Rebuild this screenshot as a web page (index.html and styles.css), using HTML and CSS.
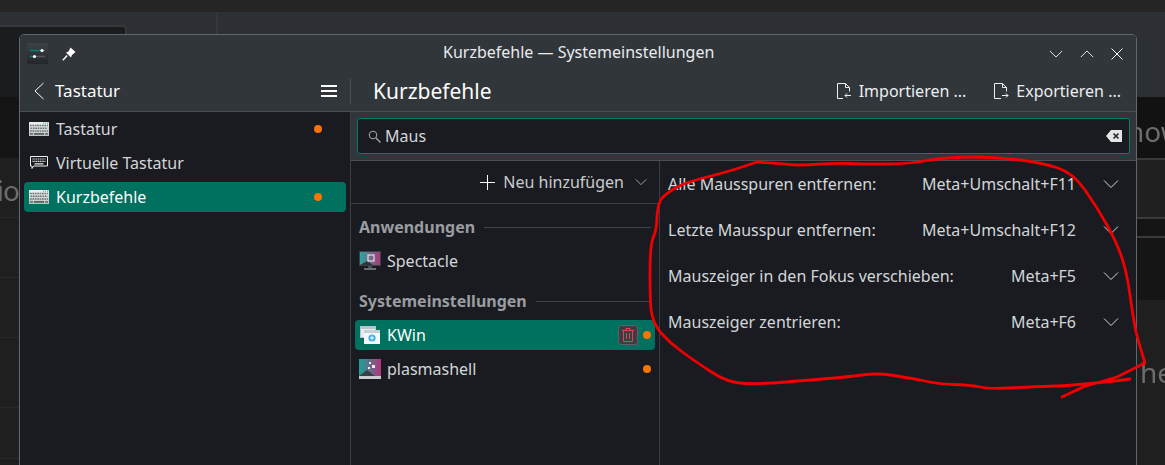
FILE: index.html
```html
<!DOCTYPE html>
<html lang="de">
<head>
  <meta charset="UTF-8">
  <meta name="viewport" content="width=device-width, initial-scale=1.0">
  <title>Kurzbefehle — Systemeinstellungen</title>
  <link rel="stylesheet" href="styles.css">
</head>
<body>
  <svg class="defs" width="0" height="0">
    <defs>
      <linearGradient id="kbBody" x1="0" y1="0" x2="0" y2="1">
        <stop offset="0" stop-color="#eff1f1"/>
        <stop offset="1" stop-color="#bcc2c3"/>
      </linearGradient>
      <symbol id="kb" viewBox="0 0 20 14">
        <rect width="20" height="14" rx="0.5" fill="url(#kbBody)"/>
        <rect x="14" y="0.6" width="1" height="1" fill="#35a08f"/>
        <rect x="16" y="0.6" width="1" height="1" fill="#35a08f"/>
        <rect x="18" y="0.6" width="1" height="1" fill="#35a08f"/>
        <path d="M1 3.4h18M1.5 6.2h17M1 9h18" stroke="#6d7473" stroke-width="1.5" stroke-dasharray="1.7 .7" fill="none"/>
        <rect x="1" y="11" width="3" height="1.8" fill="#6d7473"/>
        <rect x="5" y="11" width="10" height="1.8" fill="#5a6160"/>
        <rect x="16" y="11" width="3" height="1.8" fill="#6d7473"/>
      </symbol>
      <symbol id="chev" viewBox="0 0 16 16">
        <path d="M1 4.5l7 7 7-7" fill="none" stroke="currentColor" stroke-width="1"/>
      </symbol>
    </defs>
  </svg>

  <div class="backdrop">
    <div class="back-top"></div>
    <div class="back-head">
      <div class="back-box"></div>
      <div class="back-split"></div>
    </div>
    <div class="back-sides">
      <div class="back-left">
        <div class="bl bl-dark"></div>
        <div class="bl bl-text">io</div>
        <div class="bl"></div>
        <div class="bl"></div>
        <div class="bl bl-tall"></div>
        <div class="bl bl-short"></div>
      </div>
      <div class="back-right">
        <div class="br-how">how</div>
        <div class="br-a"></div>
        <div class="br-b"></div>
        <div class="br-c"></div>
        <div class="br-he">he</div>
      </div>
    </div>
  </div>

  <div class="window">
    <div class="titlebar">
      <svg class="app-icon" width="21" height="21" viewBox="0 0 21 21">
        <defs>
          <linearGradient id="appBg" x1="0" y1="0" x2="0" y2="1">
            <stop offset="0" stop-color="#3d4247"/>
            <stop offset="1" stop-color="#24272a"/>
          </linearGradient>
        </defs>
        <rect width="21" height="21" fill="url(#appBg)"/>
        <path d="M3 7.5h12" stroke="#00806c" stroke-width="1.6"/>
        <path d="M15 7.5h3" stroke="#555" stroke-width="1.6"/>
        <circle cx="15" cy="7.5" r="1.6" fill="#fff"/>
        <path d="M3 13.5h5" stroke="#00806c" stroke-width="1.6"/>
        <path d="M8 13.5h10" stroke="#555" stroke-width="1.6"/>
        <circle cx="7.5" cy="13.5" r="1.6" fill="#fff"/>
      </svg>
      <svg class="pin" width="14" height="14" viewBox="0 0 14 14">
        <path d="M8.5 0.5l5 4.5-3.5 3-1 2.5-5-5 2.5-1z" fill="#fcfcfc"/>
        <path d="M5.2 8.5L0.8 13.2" stroke="#fcfcfc" stroke-width="1.4"/>
      </svg>
      <div class="win-title">Kurzbefehle — Systemeinstellungen</div>
      <div class="win-btns">
        <svg width="14" height="14" viewBox="0 0 16 16"><use href="#chev"/></svg>
        <svg width="14" height="14" viewBox="0 0 16 16"><path d="M1 11.5l7-7 7 7" fill="none" stroke="currentColor" stroke-width="1"/></svg>
        <svg width="14" height="14" viewBox="0 0 14 14"><path d="M1.5 1.5l11 11M12.5 1.5l-11 11" fill="none" stroke="currentColor" stroke-width="1"/></svg>
      </div>
    </div>

    <div class="toolbar">
      <div class="tb-left">
        <svg class="back" width="12" height="18" viewBox="0 0 12 18"><path d="M10.5 1L2 9l8.5 8" fill="none" stroke="currentColor" stroke-width="1"/></svg>
        <span class="tb-crumb">Tastatur</span>
        <div class="burger"><i></i><i></i><i></i></div>
        <span class="tb-sep"></span>
      </div>
      <div class="tb-right">
        <h1>Kurzbefehle</h1>
        <div class="tb-action">
          <svg width="15" height="16" viewBox="0 0 15 16"><path d="M6 15.5H.5V.5h8l4 4v4M8.5.5v4h4M14 12.5H8m2-2l-2 2 2 2" fill="none" stroke="currentColor" stroke-width="1"/></svg>
          <span>Importieren ...</span>
        </div>
        <div class="tb-action">
          <svg width="15" height="16" viewBox="0 0 15 16"><path d="M7 15.5H.5V.5h8l4 4v4M8.5.5v4h4M8 12.5h6m-2-2l2 2-2 2" fill="none" stroke="currentColor" stroke-width="1"/></svg>
          <span>Exportieren ...</span>
        </div>
      </div>
    </div>

    <div class="body">
      <aside class="sidebar">
        <div class="side-row">
          <svg class="ico" width="20" height="14"><use href="#kb"/></svg>
          <span>Tastatur</span><b class="dot"></b>
        </div>
        <div class="side-row">
          <svg class="ico" width="20" height="16" viewBox="0 0 20 16">
            <path d="M1.5 1.5h17v9.500H4.500l-1.500 2.500v-2.500H1.500z" fill="#17191d" stroke="#eff0f1"/>
            <path d="M3.500 4h13M3.500 6.300h13" stroke="#eff0f1" stroke-width="1.200" stroke-dasharray="1.200 .6"/>
            <path d="M5.500 8.800h9" stroke="#eff0f1" stroke-width="1.200"/>
          </svg>
          <span>Virtuelle Tastatur</span>
        </div>
        <div class="side-row selected">
          <svg class="ico" width="20" height="14"><use href="#kb"/></svg>
          <span>Kurzbefehle</span><b class="dot"></b>
        </div>
      </aside>

      <main class="content">
        <div class="search-wrap">
          <div class="search">
            <svg width="13" height="13" viewBox="0 0 13 13"><circle cx="5" cy="5" r="3.800" fill="none" stroke="#a8abae" stroke-width="1"/><path d="M8 8l4.500 4.500" stroke="#a8abae" stroke-width="1.200"/></svg>
            <span class="search-text">Maus</span>
            <svg class="clear" width="16" height="12" viewBox="0 0 16 12"><path d="M5 0h11v12H5L0 6z" fill="#e4e5e6"/><path d="M7.500 3.500l5 5M12.500 3.500l-5 5" stroke="#24272a" stroke-width="1.600"/></svg>
          </div>
        </div>

        <div class="panes">
          <div class="components">
            <div class="add-row">
              <svg width="15" height="15" viewBox="0 0 15 15"><path d="M7.500 0v15M0 7.500h15" stroke="currentColor" stroke-width="1"/></svg>
              <span>Neu hinzufügen</span>
              <svg class="add-chev" width="12" height="12" viewBox="0 0 16 16"><use href="#chev"/></svg>
            </div>
            <div class="comp-list">
              <div class="group">Anwendungen</div>
              <div class="comp-row">
                <svg class="comp-ico" width="22" height="20" viewBox="0 0 22 20">
                  <defs>
                    <linearGradient id="spec" x1="0" y1="0" x2="1" y2="0">
                      <stop offset="0" stop-color="#2aa7a0"/>
                      <stop offset="1" stop-color="#a83a78"/>
                    </linearGradient>
                  </defs>
                  <rect x="0" y="0" width="22" height="15" fill="#3a3f44"/>
                  <rect x="1" y="1" width="20" height="13" fill="url(#spec)"/>
                  <path d="M1 14l7-4 6 4z" fill="#31363b"/>
                  <rect x="9" y="4" width="6" height="6" fill="none" stroke="#f3d9e6" stroke-width="1.200"/>
                  <rect x="5" y="17" width="12" height="2" fill="#6a6f73"/>
                  <rect x="9" y="15" width="4" height="2" fill="#4a4f53"/>
                </svg>
                <span>Spectacle</span>
              </div>
              <div class="group">Systemeinstellungen</div>
              <div class="comp-row selected">
                <svg class="comp-ico kwin" width="20" height="18" viewBox="0 0 20 18">
                  <rect x="0.500" y="0.500" width="15" height="11" fill="#e6edf2" stroke="#b8c4cc"/>
                  <rect x="0.500" y="0.500" width="15" height="2.500" fill="#b8c4cc"/>
                  <rect x="4" y="4" width="16" height="14" fill="#f4f8fa"/>
                  <rect x="4" y="4" width="16" height="3" fill="#c5d0d8"/>
                  <circle cx="12" cy="12" r="3.600" fill="#3daee9"/>
                  <path d="M12 9.800v4.400M10 12h4" stroke="#fff" stroke-width="1"/>
                </svg>
                <span>KWin</span>
                <div class="del">
                  <svg width="12" height="14" viewBox="0 0 12 14"><path d="M0 2.500h12M4 2.500V.5h4v2M1.500 2.500v11h9v-11M4.500 5v6M7.500 5v6" fill="none" stroke="#da4453" stroke-width="1"/></svg>
                </div>
                <b class="dot"></b>
              </div>
              <div class="comp-row">
                <svg class="comp-ico" width="22" height="20" viewBox="0 0 22 20">
                  <defs>
                    <linearGradient id="plasma" x1="0" y1="0" x2="1" y2="0">
                      <stop offset="0" stop-color="#17a398"/>
                      <stop offset="1" stop-color="#b5357b"/>
                    </linearGradient>
                  </defs>
                  <rect width="22" height="17" fill="url(#plasma)"/>
                  <path d="M0 17l8-6 8 6z" fill="#3a3f44"/>
                  <path d="M10 3h2v2h-2zM13 6h3v3h-3zM9 8h2v2H9z" fill="#f5e8ef"/>
                  <rect y="17" width="22" height="3" fill="#c9cdd0"/>
                </svg>
                <span>plasmashell</span>
                <b class="dot"></b>
              </div>
            </div>
          </div>

          <div class="shortcuts">
            <div class="sc-row">
              <span class="sc-name">Alle Mausspuren entfernen:</span>
              <span class="sc-keys">Meta+Umschalt+F11</span>
              <svg class="sc-chev" width="16" height="16" viewBox="0 0 16 16"><use href="#chev"/></svg>
            </div>
            <div class="sc-row">
              <span class="sc-name">Letzte Mausspur entfernen:</span>
              <span class="sc-keys">Meta+Umschalt+F12</span>
              <svg class="sc-chev" width="16" height="16" viewBox="0 0 16 16"><use href="#chev"/></svg>
            </div>
            <div class="sc-row">
              <span class="sc-name">Mauszeiger in den Fokus verschieben:</span>
              <span class="sc-keys">Meta+F5</span>
              <svg class="sc-chev" width="16" height="16" viewBox="0 0 16 16"><use href="#chev"/></svg>
            </div>
            <div class="sc-row">
              <span class="sc-name">Mauszeiger zentrieren:</span>
              <span class="sc-keys">Meta+F6</span>
              <svg class="sc-chev" width="16" height="16" viewBox="0 0 16 16"><use href="#chev"/></svg>
            </div>
          </div>
        </div>
      </main>
    </div>
  </div>

  <!-- rote Markierung von Hand -->
  <svg class="scribble" width="1165" height="465" viewBox="0 0 1165 465">
    <path d="M757 162Q785 164 797 165Q810 165 822 164Q835 163 849 163.500Q863 164 886 164Q910 164 930 160Q950 157 973 157Q997 157 1020 160Q1043 163 1058 168Q1073 173 1085 190Q1097 207 1107 225Q1117 243 1122 258Q1127 273 1130 295Q1133 317 1136 332Q1140 347 1145 363L1117 377 1083 387 1062 397M1130 379Q1083 385 1055 386Q1027 387 1008 388Q990 389 980 387Q970 385 953 384.500Q937 384 920 380Q903 377 890 375Q877 373 862 375Q847 377 828 378.500Q810 380 786 382Q763 384 745 383.500Q727 383 710 371Q693 360 681 351Q670 343 661 333Q653 323 651 310Q650 297 650 272Q650 247 653 238Q657 230 657 216Q658 203 662 198Q667 193 677 187Q687 182 707 177Q727 172 742 167L757 162" fill="none" stroke="#f00000" stroke-width="2.800" stroke-linejoin="round" stroke-linecap="round"/>
  </svg>
</body>
</html>
```

FILE: styles.css
```css
:root {
  --head: #31363b;
  --view: #191b20;
  --line: #4a4f54;
  --teal: #00705f;
  --teal-line: #00806c;
  --text: #d3d6d9;
  --white: #fcfcfc;
  --orange: #f67400;
}

* {
  box-sizing: border-box;
  margin: 0;
  padding: 0;
}

html, body {
  height: 465px;
  overflow: hidden;
}

body {
  position: relative;
  background-color: #1e1e1e;
  color: var(--text);
  font-family: 'Noto Sans', sans-serif;
  font-size: 16px;
}

.defs {
  position: absolute;
}

/* desktop behind the window */
.backdrop {
  position: absolute;
  inset: 0;
  display: flex;
  flex-direction: column;
}

.back-top {
  height: 12px;
  background-color: #252525;
}

.back-head {
  height: 85px;
  display: flex;
  background-color: #2c3034;
}

.back-box {
  width: 127px;
  height: 72px;
  margin-top: 13px;
  background-color: #1b1c1e;
  border: 2px solid #34383c;
  border-left: 0;
  border-bottom: 0;
  border-top-right-radius: 4px;
}

.back-split {
  width: 2px;
  margin-left: 89px;
  background-color: #34383c;
}

.back-sides {
  flex: 1;
  display: flex;
  justify-content: space-between;
}

.back-left {
  width: 19px;
  overflow: hidden;
}

.bl {
  height: 60px;
  background-color: #1f1f1f;
  border-bottom: 1px solid #292929;
}

.bl-dark {
  height: 61px;
  background-color: #141414;
  border-bottom: 0;
}

.bl-tall {
  height: 70px;
}

.bl-short {
  height: 51px;
}

.bl-text {
  color: #6c6c6c;
  font-size: 28px;
  line-height: 64px;
  letter-spacing: -1px;
  filter: blur(.6px);
  white-space: nowrap;
  direction: rtl;
}

.back-right {
  width: 28px;
  overflow: hidden;
  color: #6c6c6c;
  font-size: 28px;
  display: flex;
  flex-direction: column;
}

.br-how {
  height: 63px;
  background-color: #121212;
  line-height: 68px;
  white-space: nowrap;
  filter: blur(.5px);
  text-indent: -10px;
  border-bottom: 2px solid #3a3a3a;
}

.br-a {
  height: 59px;
  background-color: #202020;
  border-bottom: 2px solid #3a3a3a;
}

.br-b {
  height: 19px;
  background-color: #141414;
  border-bottom: 2px solid #3a3a3a;
}

.br-c {
  height: 62px;
  background-color: #151515;
}

.br-he {
  flex: 1;
  background-color: #1f1f1f;
  line-height: 144px;
  padding-left: 3px;
  filter: blur(.5px);
}

/* window */
.window {
  position: absolute;
  left: 19px;
  top: 34px;
  width: 1118px;
  height: 440px;
  border: 1px solid #62676c;
  border-radius: 5px 5px 0 0;
  background-color: var(--view);
  display: flex;
  flex-direction: column;
  overflow: hidden;
}

.titlebar {
  height: 37px;
  flex-shrink: 0;
  background-color: var(--head);
  display: flex;
  align-items: center;
  position: relative;
  padding-left: 7px;
  color: var(--white);
}

.app-icon {
  margin-right: 14px;
}

.win-title {
  position: absolute;
  left: 423px;
  top: 7px;
  font-size: 16px;
  line-height: 21px;
  color: #e8eaec;
}

.win-btns {
  margin-left: auto;
  margin-right: 12px;
  display: flex;
  gap: 16.5px;
  margin-top: 1px;
}

.toolbar {
  height: 40px;
  flex-shrink: 0;
  background-color: var(--head);
  border-bottom: 1px solid var(--line);
  display: flex;
  color: var(--white);
}

.tb-left {
  width: 331px;
  display: flex;
  align-items: center;
  padding-left: 13px;
  padding-bottom: 2px;
}

.tb-crumb {
  margin-left: 10px;
  font-size: 17px;
}

.burger {
  margin-left: auto;
  margin-right: 13px;
  width: 16px;
  display: flex;
  flex-direction: column;
  gap: 3px;
}

.burger i {
  display: block;
  height: 2px;
  background-color: var(--white);
}

.tb-sep {
  width: 1px;
  height: 26px;
  background-color: var(--line);
}

.tb-right {
  flex: 1;
  display: flex;
  align-items: center;
  padding-left: 22px;
  padding-bottom: 2px;
}

.tb-right h1 {
  font-size: 21px;
  font-weight: 400;
  margin-right: auto;
}

.tb-action {
  display: flex;
  align-items: center;
  gap: 7px;
  margin-right: 15px;
  color: #eceef0;
}

.tb-action + .tb-action {
  margin-left: 13px;
}

.body {
  flex: 1;
  display: flex;
  min-height: 0;
}

.sidebar {
  width: 331px;
  flex-shrink: 0;
  padding: 2px 4px 0 4px;
  border-right: 1px solid #3a3e43;
  display: flex;
  flex-direction: column;
  gap: 4px;
}

.side-row {
  height: 30px;
  display: flex;
  align-items: center;
  padding: 0 24px 0 5px;
  border-radius: 4px;
}

.side-row .ico {
  margin-right: 7px;
  flex-shrink: 0;
}

.side-row.selected,
.comp-row.selected {
  background-color: var(--teal);
  color: var(--white);
}

.dot {
  width: 8px;
  height: 8px;
  margin-left: auto;
  border-radius: 50%;
  background-color: var(--orange);
  flex-shrink: 0;
}

.content {
  flex: 1;
  display: flex;
  flex-direction: column;
  min-width: 0;
}

.search-wrap {
  height: 49px;
  flex-shrink: 0;
  background-color: var(--head);
  padding: 6px;
  border-bottom: 1px solid var(--line);
}

.search {
  height: 36px;
  background-color: var(--view);
  border: 1px solid var(--teal-line);
  border-radius: 3px;
  display: flex;
  align-items: center;
  padding: 0 7px 0 10px;
}

.search-text {
  margin-left: 4px;
  margin-top: -1px;
}

.clear {
  margin-left: auto;
}

.panes {
  flex: 1;
  display: flex;
  min-height: 0;
}

.components {
  width: 309px;
  flex-shrink: 0;
  border-right: 1px solid #3a3e43;
}

.add-row {
  height: 43px;
  display: flex;
  align-items: center;
  justify-content: flex-end;
  padding-right: 12px;
  border-bottom: 1px solid #3a3e43;
  color: #c9cccf;
}

.add-row svg:first-child {
  color: var(--white);
  margin-right: 8px;
}

.add-chev {
  margin-left: 11px;
}

.comp-list {
  padding: 6px 4px 0 4px;
}

.group {
  height: 34px;
  display: flex;
  align-items: center;
  gap: 9px;
  padding-left: 4px;
  margin-bottom: 2px;
  font-weight: 700;
  color: #9a9da0;
}

.group::after {
  content: "";
  flex: 1;
  height: 1px;
  margin-right: 4px;
  background-color: #3f4348;
}

.comp-row {
  height: 30px;
  display: flex;
  align-items: center;
  padding: 0 4px;
  border-radius: 4px;
  margin-bottom: 4px;
}

.comp-row + .group {
  margin-top: 8px;
}

.comp-ico {
  margin-right: 6px;
  flex-shrink: 0;
}

.comp-ico.kwin {
  margin-left: 1px;
  margin-right: 7px;
}

.comp-row .dot {
  margin-left: 0;
}

.comp-row span {
  margin-right: auto;
}

.del {
  width: 20px;
  height: 20px;
  margin-right: 5px;
  background-color: #3a3e43;
  border: 1px solid #5c6166;
  border-radius: 3px;
  display: flex;
  align-items: center;
  justify-content: center;
}

.shortcuts {
  flex: 1;
  padding: 0 17px 0 8px;
}

.sc-row {
  height: 46px;
  display: flex;
  align-items: center;
}

.sc-keys {
  margin-left: auto;
}

.sc-chev {
  margin-left: 27px;
  color: #d3d6d9;
}

.scribble {
  position: absolute;
  left: 0;
  top: 0;
  pointer-events: none;
}
```
